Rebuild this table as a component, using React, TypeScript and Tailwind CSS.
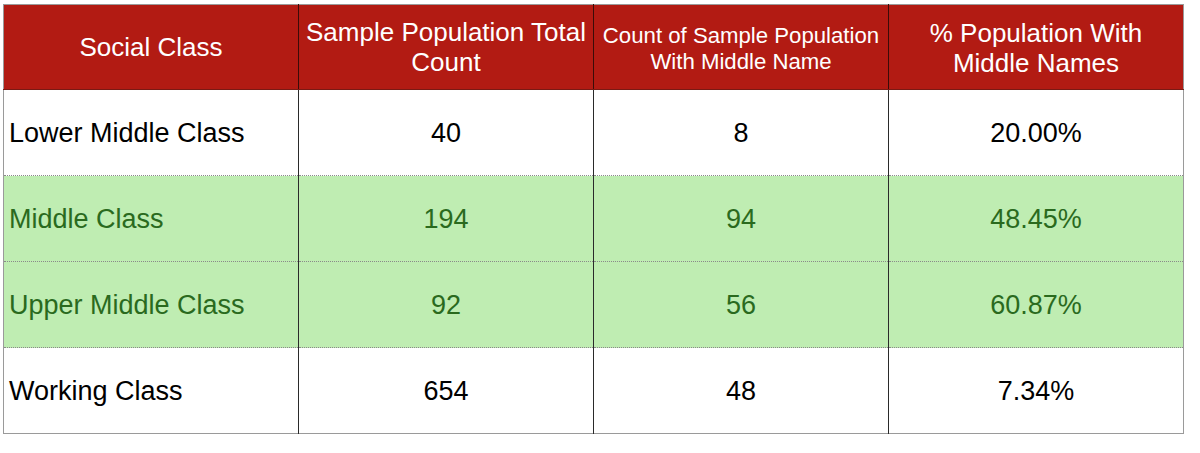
import React from 'react';

type Row = { label: string; total: string; count: string; pct: string; green?: boolean };

const rows: Row[] = [
  { label: 'Lower Middle Class', total: '40', count: '8', pct: '20.00%' },
  { label: 'Middle Class', total: '194', count: '94', pct: '48.45%', green: true },
  { label: 'Upper Middle Class', total: '92', count: '56', pct: '60.87%', green: true },
  { label: 'Working Class', total: '654', count: '48', pct: '7.34%' },
];

const App: React.FC = () => {
  return (
    <div className="w-[1200px] h-[453px] bg-white pt-[4px] pl-[3px] font-['Liberation_Sans',Arial,sans-serif]">
      <table className="table-fixed border-collapse w-[1180px] border border-[#9a9a9a]">
        <colgroup>
          <col className="w-[295px]" />
          <col className="w-[295px]" />
          <col className="w-[295px]" />
          <col className="w-[295px]" />
        </colgroup>
        <thead>
          <tr className="h-[85px] bg-[#b21b13] text-white">
            <th className="font-normal text-[26px] leading-[30px] px-1 border-r border-[#3a0c08] border-b border-b-[#7a1a14]">
              Social Class
            </th>
            <th className="font-normal text-[26px] leading-[30px] px-1 border-r border-[#3a0c08] border-b border-b-[#7a1a14]">
              Sample Population Total Count
            </th>
            <th className="font-normal text-[22.2px] leading-[26px] pt-[3px] px-0 border-r border-[#3a0c08] border-b border-b-[#7a1a14]">
              Count of Sample Population With Middle Name
            </th>
            <th className="font-normal text-[26px] leading-[30px] pt-[2px] px-8 border-b border-b-[#7a1a14]">
              % Population With Middle Names
            </th>
          </tr>
        </thead>
        <tbody>
          {rows.map((r, i) => (
            <tr
              key={r.label}
              className={`h-[86px] text-[27px] ${r.green ? 'bg-[#bfedb2] text-[#2a6a1e]' : 'bg-white text-black'} ${i < rows.length - 1 ? 'border-b border-dotted border-b-[#8a8a8a]' : ''}`}
            >
              <td className="text-left pl-[5px] pt-[2px] border-r border-r-[#2a2a2a]">{r.label}</td>
              <td className="text-center pt-[2px] border-r border-r-[#2a2a2a]">{r.total}</td>
              <td className="text-center pt-[2px] border-r border-r-[#2a2a2a]">{r.count}</td>
              <td className="text-center pt-[2px]">{r.pct}</td>
            </tr>
          ))}
        </tbody>
      </table>
    </div>
  );
};

export default App;
